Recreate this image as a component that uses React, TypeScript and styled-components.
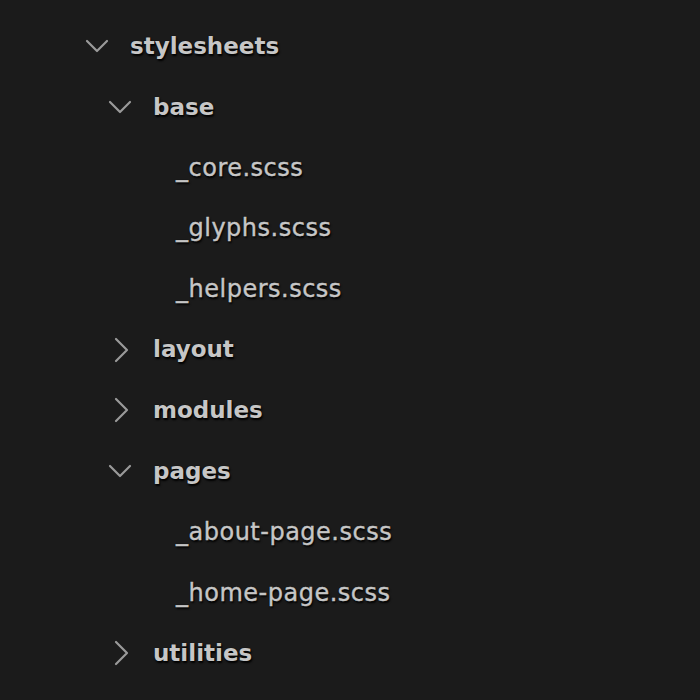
import React from "react";
import styled, { createGlobalStyle } from "styled-components";

const Global = createGlobalStyle`
  html, body { margin: 0; padding: 0; background: #1b1b1b; }
  body { font-family: "DejaVu Sans", "Verdana", sans-serif; }
`;

const Tree = styled.ul`
  list-style: none;
  margin: 0;
  padding: 16px 0 0 0;
  min-height: 700px;
  box-sizing: border-box;
  background: #1b1b1b;
`;

const Row = styled.li<{ $depth: number }>`
  display: flex;
  align-items: center;
  height: 60.7px;
  padding-left: ${(p) => 85 + p.$depth * 23}px;
`;

const Toggle = styled.span`
  width: 45px;
  flex: 0 0 45px;
  display: flex;
  align-items: center;
  color: #9a9a9a;
`;

const Label = styled.span<{ $folder: boolean }>`
  font-size: ${(p) => (p.$folder ? 23 : 24)}px;
  font-weight: ${(p) => (p.$folder ? 700 : 400)};
  color: #c6c6c6;
  text-shadow: 1px 2px 2px #000, 0 0 1px #000;
  letter-spacing: ${(p) => (p.$folder ? "0" : "0.5px")};
  -webkit-text-stroke: ${(p) => (p.$folder ? "0" : "0.4px #c6c6c6")};
  line-height: 1;
`;

type Node = { name: string; depth: number; folder?: boolean; open?: boolean };

const nodes: Node[] = [
  { name: "stylesheets", depth: 0, folder: true, open: true },
  { name: "base", depth: 1, folder: true, open: true },
  { name: "_core.scss", depth: 2 },
  { name: "_glyphs.scss", depth: 2 },
  { name: "_helpers.scss", depth: 2 },
  { name: "layout", depth: 1, folder: true },
  { name: "modules", depth: 1, folder: true },
  { name: "pages", depth: 1, folder: true, open: true },
  { name: "_about-page.scss", depth: 2 },
  { name: "_home-page.scss", depth: 2 },
  { name: "utilities", depth: 1, folder: true },
];

const Chevron = ({ open }: { open: boolean }) => (
  <svg width="26" height="26" viewBox="0 0 26 26" fill="none">
    <polyline
      points={open ? "2,8 12,18 22,8" : "8,2 19,13 8,24"}
      stroke="currentColor"
      strokeWidth="2.2"
      strokeLinecap="round"
      strokeLinejoin="round"
    />
  </svg>
);

export default function App() {
  return (
    <>
      <Global />
      <Tree>
        {nodes.map((n) => (
          <Row key={n.name} $depth={n.depth}>
            <Toggle>{n.folder ? <Chevron open={!!n.open} /> : null}</Toggle>
            <Label $folder={!!n.folder}>{n.name}</Label>
          </Row>
        ))}
      </Tree>
    </>
  );
}
